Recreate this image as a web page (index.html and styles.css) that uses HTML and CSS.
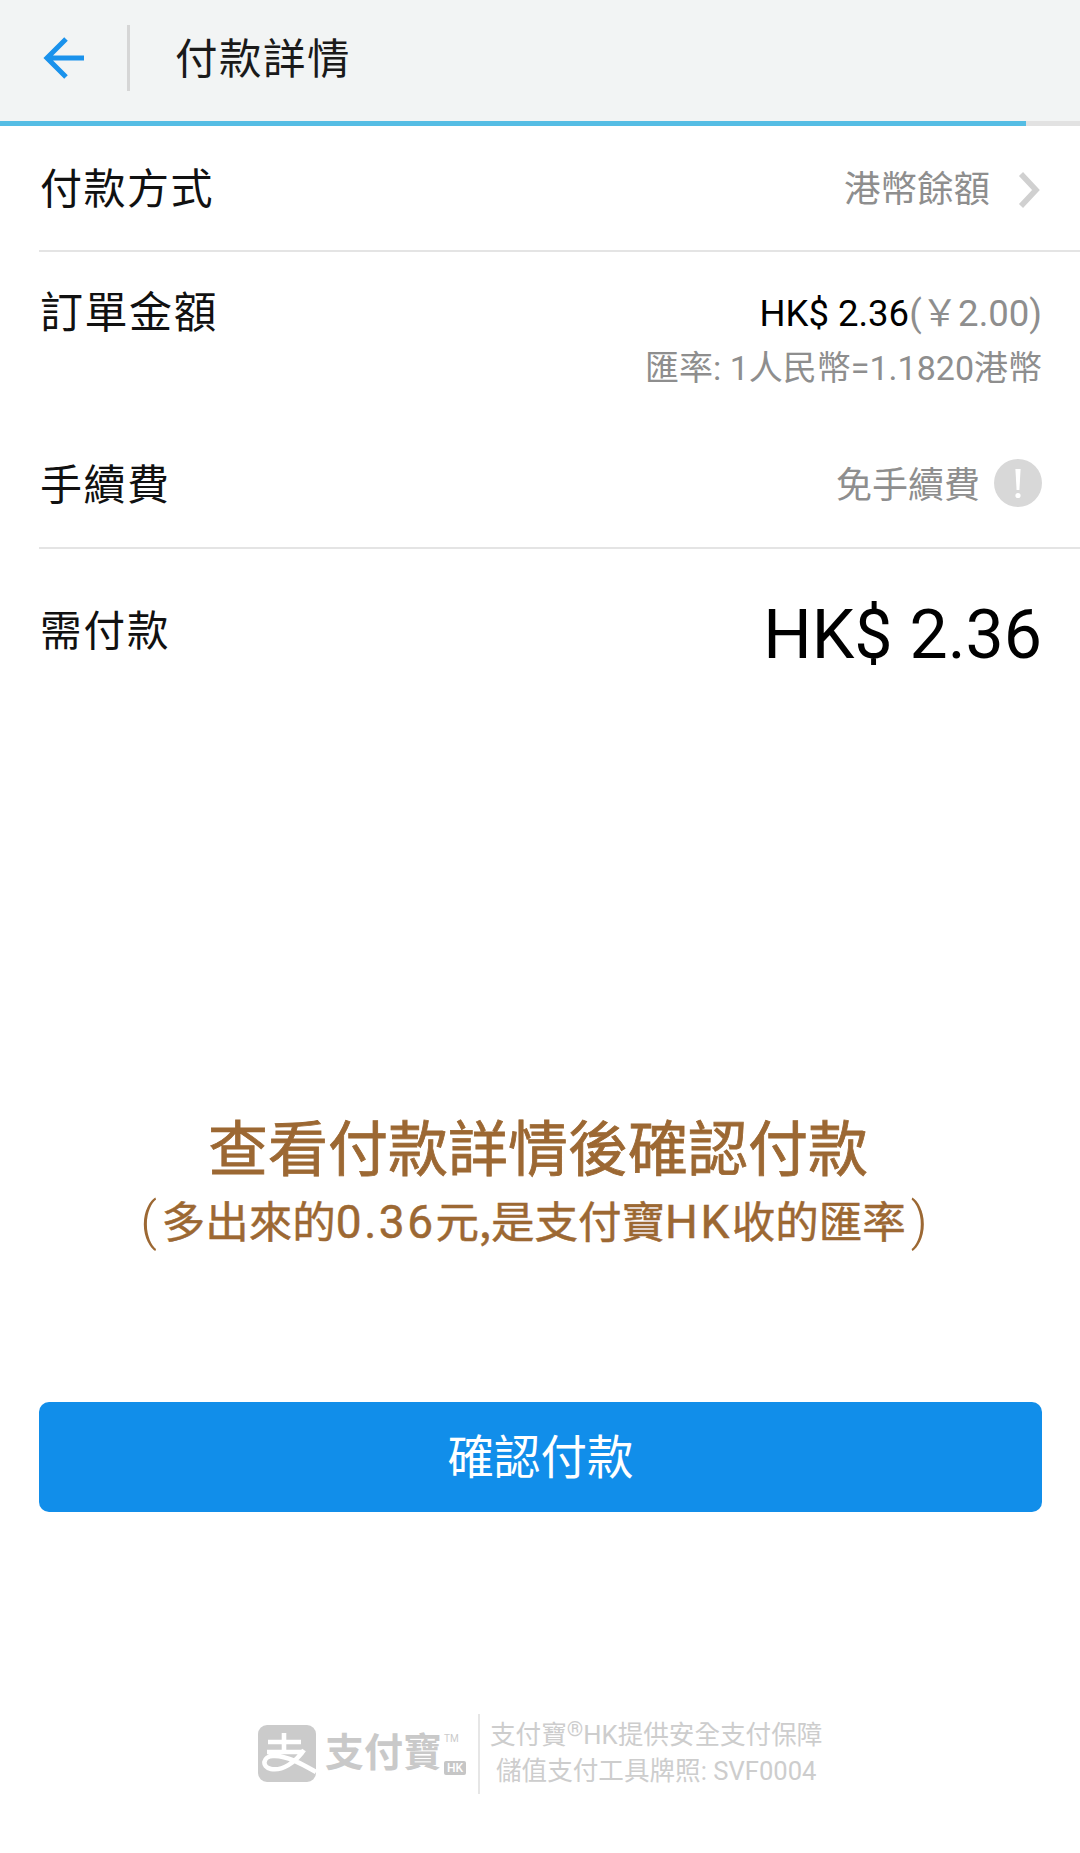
FILE: index.html
```html
<!DOCTYPE html>
<html lang="zh-Hant">
<head>
<meta charset="utf-8">
<title>付款詳情</title>
<link rel="stylesheet" href="styles.css">
</head>
<body>
<div class="page">
  <header class="topbar">
    <div class="back">
      <svg class="back-icon" viewBox="0 0 42 44" width="42" height="44"><path d="M23 3 L4 22 L23 41 M4 22 H41" fill="none" stroke="#1a92ec" stroke-width="5"/></svg>
    </div>
    <h1 class="title">付款詳情</h1>
  </header>
  <div class="progress"><div class="progress-fill"></div></div>

  <section class="row row-method">
    <div class="label">付款方式</div>
    <div class="method-value">
      <span class="muted">港幣餘額</span>
      <svg class="chevron" viewBox="0 0 22 36" width="22" height="36"><path d="M3 2 L18 18 L3 34" fill="none" stroke="#d0d0d0" stroke-width="5.6"/></svg>
    </div>
  </section>

  <section class="row-order">
    <div class="label label-wide">訂單金額</div>
    <div class="order-values">
      <div class="order-amount"><span class="black">HK$ 2.36</span><span class="muted-cny">(￥2.00)</span></div>
      <div class="rate">匯率: 1人民幣=1.1820港幣</div>
    </div>
  </section>

  <section class="row row-fee">
    <div class="label">手續費</div>
    <div class="fee-value">
      <span class="muted muted-fee">免手續費</span>
      <svg class="info" viewBox="0 0 48 48" width="48" height="48"><circle cx="24" cy="24" r="24" fill="#d8d8d8"/><path d="M21.4 10 H26.6 L25.4 31 H22.6 Z" fill="#fff"/><circle cx="24" cy="36.500" r="2.600" fill="#fff"/></svg>
    </div>
  </section>

  <section class="row-pay">
    <div class="label">需付款</div>
    <div class="pay-amount">HK$ 2.36</div>
  </section>

  <section class="promo">
    <div class="promo-main">查看付款詳情後確認付款</div>
    <div class="promo-sub"><span class="paren">(</span>多出來的<span class="latin">0.36</span>元,是支付寶<span class="latin">HK</span>收的匯率<span class="paren">)</span></div>
  </section>

  <div class="action"><button class="confirm" type="button"><span class="confirm-text">確認付款</span></button></div>

  <footer class="footer">
    <div class="brand">
      <svg class="brand-mark" viewBox="0 0 58 57" width="58" height="57">
        <rect width="58" height="57" rx="9" fill="#cbcbcb"/>
        <path d="M10 17 H43 M26 8 V26 M9 27 H46 M46 25 C37 38 24 46 13 44 C3 42 5 31 15 31 C28 30 44 39 58 47" fill="none" stroke="#fff" stroke-width="4.600"/>
      </svg>
      <span class="brand-name">支付寶</span>
      <span class="brand-tags"><span class="tm">TM</span><span class="hk">HK</span></span>
    </div>
    <div class="footer-divider"></div>
    <div class="footer-text">
      <div>支付寶<sup class="reg">®</sup>HK提供安全支付保障</div>
      <div>儲值支付工具牌照: SVF0004</div>
    </div>
  </footer>
</div>
</body>
</html>
```
FILE: styles.css
```css
* { box-sizing: border-box; }
html, body { margin: 0; padding: 0; background: #fff; }
body { font-family: Roboto, "Noto Sans CJK TC", sans-serif; }
.page { width: 1080px; height: 1853px; display: flex; flex-direction: column; overflow: hidden; }

.topbar { height: 121px; background: #f2f4f4; display: flex; align-items: center; padding: 0 0 6px 43px; flex: none; }
.back { width: 87px; height: 66px; display: flex; align-items: center; border-right: 3px solid #d6d6d6; }
.back-icon { display: block; }
.title { margin: 4px 0 0 45px; font-size: 42.500px; font-weight: 400; color: #1a1a1a; letter-spacing: 1.500px; line-height: 60px; }

.progress { height: 5px; background: #e2e2e2; flex: none; }
.progress-fill { width: 1026px; height: 100%; background: #55bde4; }

.row { display: flex; justify-content: space-between; align-items: center; margin-left: 39px; padding-right: 38px; flex: none; }
.label { font-size: 42px; color: #111; letter-spacing: 1.500px; line-height: 60px; margin-left: 1px; }
.label-wide { font-size: 43px; }
.muted { font-size: 36.500px; color: #8e8e8e; line-height: 50px; }
.muted-fee { font-size: 36px; }

.row-method { height: 126px; border-bottom: 2px solid #e4e4e4; padding-top: 3px; }
.method-value { display: flex; align-items: center; gap: 28px; }
.chevron { display: block; margin-right: 2px; }

.row-order { display: flex; justify-content: space-between; align-items: flex-start; margin-left: 39px; padding: 31px 38px 0 0; height: 172px; flex: none; }
.order-values { text-align: right; }
.order-amount { font-size: 36.500px; line-height: 50px; margin-top: 6px; }
.black { color: #000; }
.muted-cny { color: #8e8e8e; }
.rate { font-size: 34px; color: #8e8e8e; line-height: 50px; margin-top: 4px; }

.row-fee { height: 125px; border-bottom: 2px solid #e4e4e4; }
.fee-value { display: flex; align-items: center; gap: 14px; }
.info { display: block; margin-top: -5px; }

.row-pay { display: flex; justify-content: space-between; align-items: center; margin-left: 39px; padding-right: 38px; height: 166px; flex: none; }
.row-pay .label { font-size: 41.500px; letter-spacing: 2px; margin-top: 0; }
.pay-amount { font-size: 68px; color: #000; line-height: 80px; margin-top: 6px; }

.promo { margin-top: 394px; padding-right: 4px; text-align: center; flex: none; }
.promo-main { font-size: 60px; font-weight: 400; color: #9c6833; -webkit-text-stroke: 0.8px #9c6833; line-height: 84px; }
.promo-sub { font-size: 43.500px; font-weight: 400; color: #9c6833; -webkit-text-stroke: 0.5px #9c6833; line-height: 62px; margin-top: -4px; padding-right: 8px; font-family: "Noto Sans CJK TC", sans-serif; }
.latin { font-family: Roboto, sans-serif; font-size: 46px; letter-spacing: 2.500px; }
.paren { font-family: Roboto, sans-serif; font-size: 52px; font-weight: 300; -webkit-text-stroke: 0; line-height: 0; vertical-align: -1px; margin: 0 5px; }

.action { padding: 0 38px 0 39px; margin-top: 149px; flex: none; }
.confirm { width: 100%; height: 110px; border: 0; border-radius: 10px; background: #118eea; color: #fff; font-family: inherit; font-size: 46.500px; display: block; padding: 0 0 8px; }

.footer { margin-top: 202px; height: 80px; display: flex; align-items: center; padding-left: 258px; flex: none; }
.brand { display: flex; align-items: center; width: 220px; margin-bottom: 2px; }
.brand-mark { display: block; flex: none; }
.brand-name { font-size: 39px; font-weight: 700; color: #c9c9c9; margin-left: 9px; line-height: 50px; }
.brand-tags { display: flex; flex-direction: column; align-items: flex-start; justify-content: space-between; height: 41px; margin-left: 2px; margin-top: 2px; }
.tm { font-size: 10px; color: #cbcbcb; line-height: 9px; }
.hk { font-size: 12px; font-weight: 500; color: #fff; background: #c6c6c6; border-radius: 2px; padding: 0 3px; line-height: 14px; }
.footer-divider { width: 2px; height: 80px; background: #e6e6e6; flex: none; }
.footer-text { margin: 0 0 2px 10px; font-size: 25.600px; color: #cdcdcd; text-align: center; line-height: 36px; }
.reg { font-size: 21px; line-height: 0; vertical-align: 8px; }
```
